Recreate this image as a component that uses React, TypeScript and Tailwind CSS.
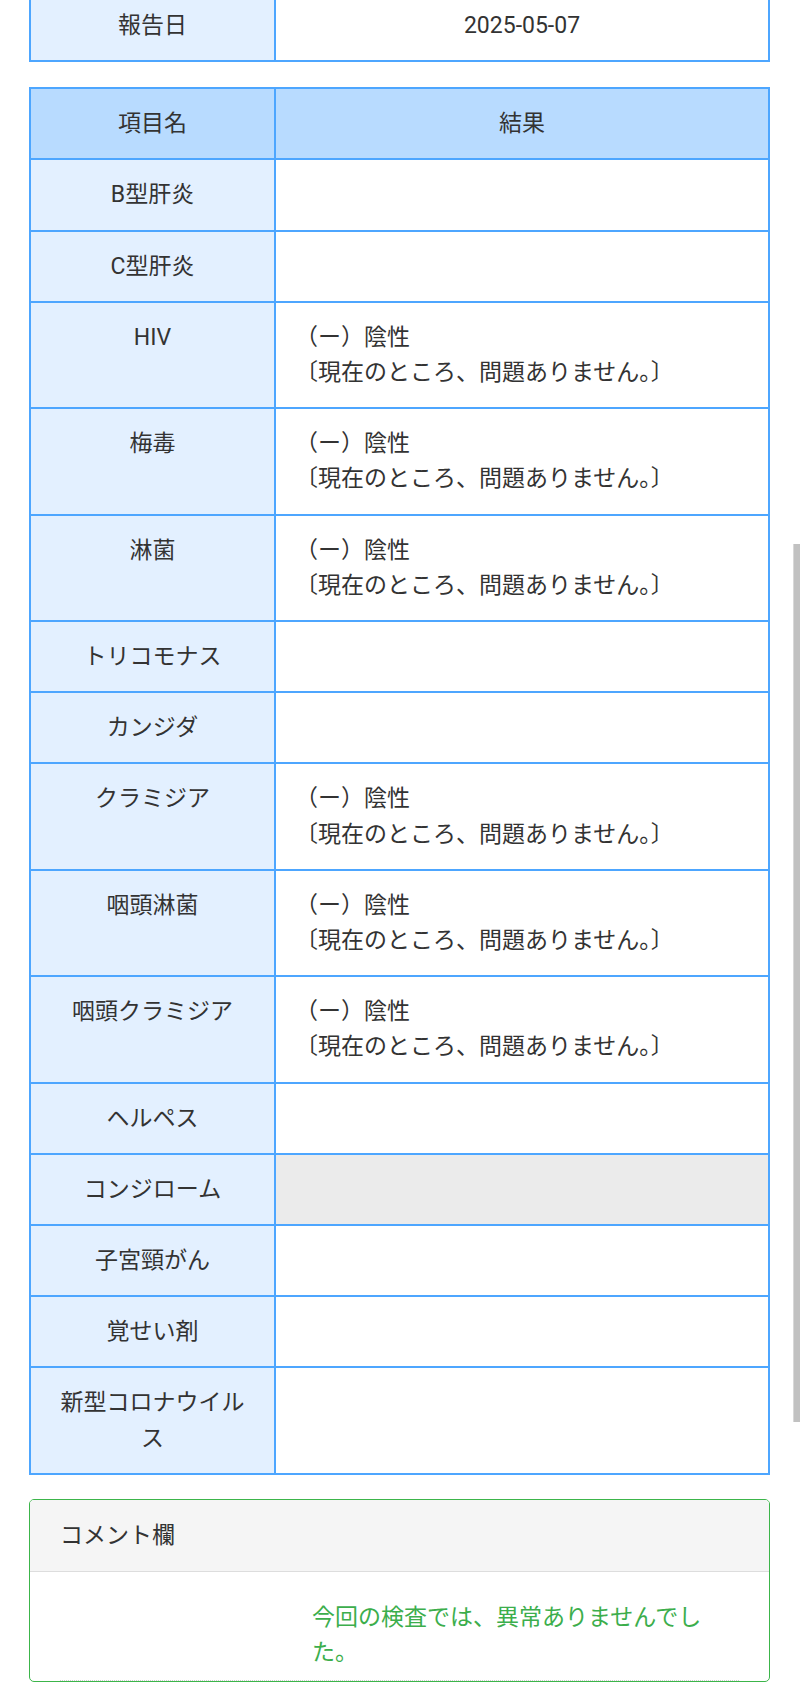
import { ReactElement } from "react";

type Row = { name: string; result?: boolean; gray?: boolean };

const rows: Row[] = [
  { name: "B型肝炎" },
  { name: "C型肝炎" },
  { name: "HIV", result: true },
  { name: "梅毒", result: true },
  { name: "淋菌", result: true },
  { name: "トリコモナス" },
  { name: "カンジダ" },
  { name: "クラミジア", result: true },
  { name: "咽頭淋菌", result: true },
  { name: "咽頭クラミジア", result: true },
  { name: "ヘルペス" },
  { name: "コンジローム", gray: true },
  { name: "子宮頸がん" },
  { name: "覚せい剤" },
  { name: "新型コロナウイルス" },
];

const cell = "border-2 border-[#4da6ff] py-[17px] align-top";

export default function App(): ReactElement {
  return (
    <div className="relative w-full h-[1682px] overflow-hidden bg-white text-[23px] leading-[35.2px] text-[#333] font-['Roboto','Noto_Sans_CJK_JP',sans-serif]">
      <div className="-mt-[11px] pl-[29px] pr-[30px]">

        {/* 報告日 */}
        <table className="w-full table-fixed border-collapse">
          <colgroup>
            <col className="w-[245px]" />
            <col />
          </colgroup>
          <tbody>
            <tr>
              <td className={`${cell} px-6 bg-[#e3f0ff] text-center`}>報告日</td>
              <td className={`${cell} px-6 text-center`}>2025-05-07</td>
            </tr>
          </tbody>
        </table>

        {/* 検査結果 */}
        <table className="w-full table-fixed border-collapse mt-[25px]">
          <colgroup>
            <col className="w-[245px]" />
            <col />
          </colgroup>
          <thead>
            <tr>
              <th className={`${cell} px-6 bg-[#b8dbff] font-normal text-center`}>項目名</th>
              <th className={`${cell} px-6 bg-[#b8dbff] font-normal text-center`}>結果</th>
            </tr>
          </thead>
          <tbody>
            {rows.map((row) => (
              <tr key={row.name}>
                <td className={`${cell} px-6 bg-[#e3f0ff] text-center`}>{row.name}</td>
                <td className={`${cell} pl-[19px] pr-6 text-left ${row.gray ? "bg-[#ebebeb]" : ""}`}>
                  {row.result && (
                    <>
                      （ー）陰性
                      <br />
                      〔現在のところ、問題ありません。〕
                    </>
                  )}
                </td>
              </tr>
            ))}
          </tbody>
        </table>

        {/* コメント欄 */}
        <div className="mt-[24px] border border-[#3cb54a] rounded-[5px] overflow-hidden">
          <div className="bg-[#f5f5f5] border-b border-[#ddd] px-[30px] py-[18px]">コメント欄</div>
          <div className="px-[30px] pt-[28px]">
            <div className="grid grid-cols-[252px_1fr] border-b border-dotted border-[#ccc] pb-[10px]">
              <div />
              <p className="text-[#3cae4c] pr-[20px]">今回の検査では、異常ありませんでした。</p>
            </div>
          </div>
        </div>
      </div>

      {/* overlay scrollbar */}
      <div className="absolute right-0 top-[544px] h-[878px] w-[7px] bg-[#c1c1c1] border-l border-[#d8d8d8]" />
    </div>
  );
}
